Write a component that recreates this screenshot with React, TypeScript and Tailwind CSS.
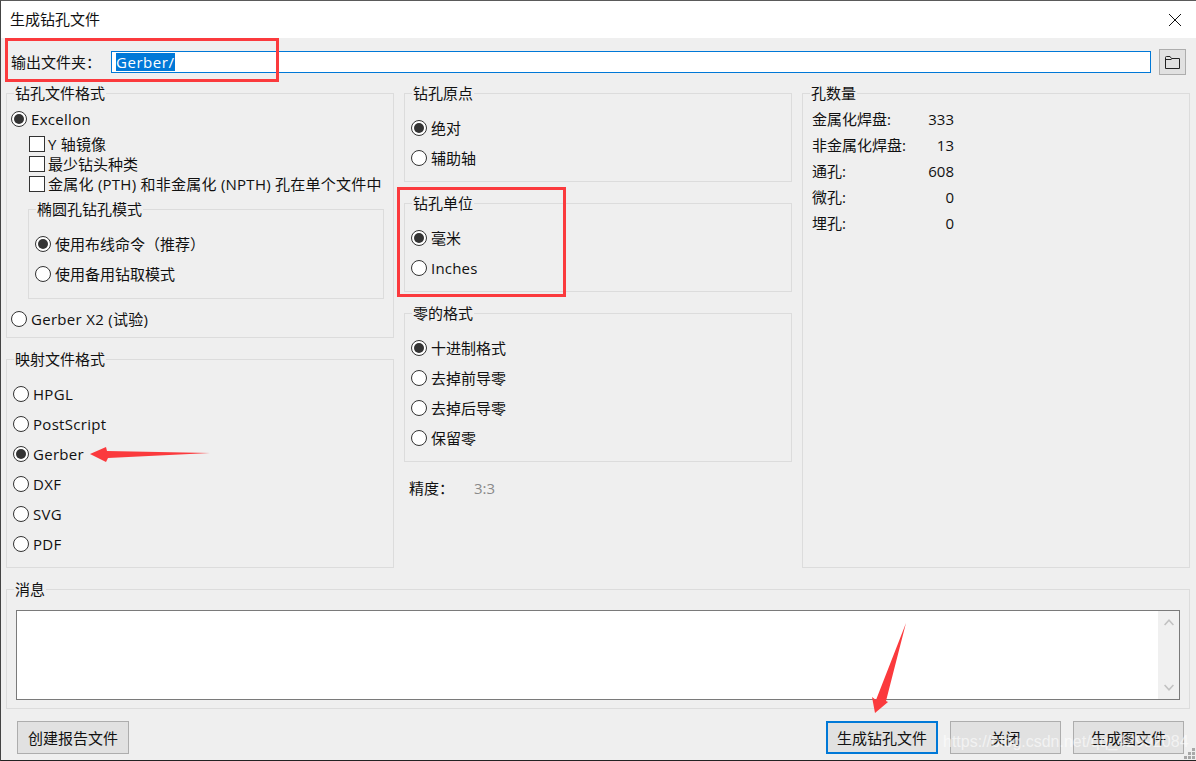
import React from "react";

function Radio({ checked = false, label, className = "" }: { checked?: boolean; label: string; className?: string }) {
  return (
    <div className={`flex items-center gap-1 ${className}`}>
      <span className="flex h-4 w-4 shrink-0 items-center justify-center rounded-full border border-[#333] bg-white">
        {checked && <span className="h-[10px] w-[10px] rounded-full bg-[#333]" />}
      </span>
      <span>{label}</span>
    </div>
  );
}

function Check({ label, className = "" }: { label: string; className?: string }) {
  return (
    <div className="ml-[18px] flex h-5 items-center gap-[3px]">
      <span className="h-4 w-4 shrink-0 border border-[#333] bg-white" />
      <span className={className}>{label}</span>
    </div>
  );
}

function Group({
  title,
  className = "",
  inner = "",
  children,
}: {
  title: string;
  className?: string;
  inner?: string;
  children?: React.ReactNode;
}) {
  return (
    <fieldset className={`m-0 min-w-0 border border-[#dcdcdc] p-0 ${className}`}>
      <legend className="ml-[7px] px-[1px] leading-5">{title}</legend>
      <div className={inner}>{children}</div>
    </fieldset>
  );
}

function Btn({ label, focus = false, className = "" }: { label: string; focus?: boolean; className?: string }) {
  return (
    <div
      className={`flex h-[33px] items-center justify-center bg-[#e1e1e1] ${
        focus ? "border-2 border-[#0078d7]" : "border border-[#adadad]"
      } ${className}`}
    >
      {label}
    </div>
  );
}

function Stat({ label, value }: { label: string; value: string }) {
  return (
    <div className="flex h-[26px] w-[142px] items-center justify-between">
      <span>{label}</span>
      <span>{value}</span>
    </div>
  );
}

export default function App() {
  return (
    <div className="relative flex h-[761px] w-[1196px] flex-col overflow-hidden border-t border-b border-l border-t-[#5a5a5a] border-b-[#222] border-l-[#444] bg-[#efefef] font-['Open_Sans','Noto_Sans_CJK_SC',sans-serif] text-[15px] leading-5 text-[#111]">
      {/* Title bar */}
      <div className="flex h-[37px] shrink-0 items-center justify-between bg-white pb-[2px] pl-[9px] pr-[15px]">
        <span>生成钻孔文件</span>
        <svg className="mt-[2px]" width="12" height="12" viewBox="0 0 12 12" fill="none" stroke="#111" strokeWidth="1">
          <path d="M0 0 L12 12 M12 0 L0 12" />
        </svg>
      </div>

      <div className="flex min-h-0 flex-1 flex-col pl-[5px] pr-[6px]">
        {/* Output folder */}
        <div className="flex h-[45px] shrink-0 items-center pt-[3px]">
          <span className="ml-[5px] w-[100px]">输出文件夹：</span>
          <div className="flex h-[22px] w-[1040px] items-center border border-[#0078d7] bg-white pl-1">
            <span className="bg-[#0078d7] leading-[18px] tracking-[0.55px] text-white">Gerber/</span>
          </div>
          <div className="ml-2 flex h-[26px] w-[27px] items-center justify-center border border-[#adadad] bg-[#e1e1e1]">
            <svg width="15" height="13" viewBox="0 0 15 13" fill="none" stroke="#222" strokeWidth="1">
              <path d="M0.5 12.5 V1.5 Q0.5 0.5 1.5 0.5 H5 L6.5 2.5 H14.5 V12.5 Z M0.5 3.5 H6.5" />
            </svg>
          </div>
        </div>

        {/* Columns */}
        <div className="flex h-[485px] shrink-0 gap-[10px]">
          <div className="flex w-[388px] flex-col gap-[11px]">
            <Group title="钻孔文件格式" className="h-[255px]" inner="pl-1">
              <Radio checked label="Excellon" className="mt-1 h-6 tracking-[0.3px]" />
              <div className="mt-[3px]">
                <Check label="Y 轴镜像" className="tracking-[0.2px]" />
                <Check label="最少钻头种类" />
                <Check label="金属化 (PTH) 和非金属化 (NPTH) 孔在单个文件中" className="tracking-[0.25px]" />
              </div>
              <Group title="椭圆孔钻孔模式" className="ml-[17px] mt-[5px] h-[100px] w-[356px]" inner="pl-[6px] pt-[10px]">
                <Radio checked label="使用布线命令（推荐）" className="h-[30px]" />
                <Radio label="使用备用钻取模式" className="h-[30px]" />
              </Group>
              <Radio label="Gerber X2 (试验)" className="mt-2 h-6 tracking-[0.3px]" />
            </Group>
            <Group title="映射文件格式" className="flex-1" inner="pl-[6px] pt-[10px] tracking-[0.3px]">
              <Radio label="HPGL" className="h-[30px]" />
              <Radio label="PostScript" className="h-[30px]" />
              <Radio checked label="Gerber" className="h-[30px]" />
              <Radio label="DXF" className="h-[30px]" />
              <Radio label="SVG" className="h-[30px]" />
              <Radio label="PDF" className="h-[30px]" />
            </Group>
          </div>

          <div className="flex w-[388px] flex-col gap-[11px]">
            <Group title="钻孔原点" className="h-[99px]" inner="pl-[6px] pt-[10px]">
              <Radio checked label="绝对" className="h-[30px]" />
              <Radio label="辅助轴" className="h-[30px]" />
            </Group>
            <Group title="钻孔单位" className="h-[99px]" inner="pl-[6px] pt-[10px]">
              <Radio checked label="毫米" className="h-[30px]" />
              <Radio label="Inches" className="h-[30px] tracking-[0.2px]" />
            </Group>
            <Group title="零的格式" className="h-[159px]" inner="pl-[6px] pt-[10px]">
              <Radio checked label="十进制格式" className="h-[30px]" />
              <Radio label="去掉前导零" className="h-[30px]" />
              <Radio label="去掉后导零" className="h-[30px]" />
              <Radio label="保留零" className="h-[30px]" />
            </Group>
            <div className="mt-[3px] flex h-6 items-center pl-[5px]">
              <span className="w-[65px]">精度：</span>
              <span className="text-[#8a8a8a]">3:3</span>
            </div>
          </div>

          <Group title="孔数量" className="w-[388px]" inner="pl-[9px] pt-[3px]">
            <Stat label="金属化焊盘:" value="333" />
            <Stat label="非金属化焊盘:" value="13" />
            <Stat label="通孔:" value="608" />
            <Stat label="微孔:" value="0" />
            <Stat label="埋孔:" value="0" />
          </Group>
        </div>

        {/* Messages */}
        <Group title="消息" className="mt-[11px] h-[130px] shrink-0" inner="px-[9px] pt-[11px]">
          <div className="flex h-[90px] justify-end border border-[#7a7a7a] bg-white">
            <div className="flex h-full w-[21px] flex-col items-center justify-between bg-[#f0f0f0] py-2">
              <svg width="10" height="7" viewBox="0 0 10 7" fill="none" stroke="#c2c2c2" strokeWidth="1.6">
                <path d="M0.6 6 L5 1.2 L9.4 6" />
              </svg>
              <svg width="10" height="7" viewBox="0 0 10 7" fill="none" stroke="#c2c2c2" strokeWidth="1.6">
                <path d="M0.6 1 L5 5.8 L9.4 1" />
              </svg>
            </div>
          </div>
        </Group>

        {/* Footer buttons */}
        <div className="mt-3 flex shrink-0 items-center pl-[11px] pr-[6px]">
          <Btn label="创建报告文件" className="w-[112px]" />
          <Btn label="生成钻孔文件" focus className="ml-auto w-[112px]" />
          <Btn label="关闭" className="ml-3 w-[111px]" />
          <Btn label="生成图文件" className="ml-3 w-[111px]" />
        </div>
      </div>

      {/* Annotations lying over the dialog */}
      <div className="absolute left-[4px] top-[37px] h-[44px] w-[274px] border-[3px] border-[#fb3a3d]" />
      <div className="absolute left-[396px] top-[186px] h-[110px] w-[169px] border-[3px] border-[#fb3a3d]" />
      <svg className="absolute left-[-1px] top-[-1px]" width="1196" height="761" fill="#fb3a3d">
        <path d="M90 454 L106 447 L107 451 L210 453 L108 458 L106 462 Z" />
        <path d="M906 623 L886 701 L888 702 L875 713 L872 697 L876 700 Z" />
      </svg>
      <span className="absolute left-[942px] top-[731px] whitespace-nowrap font-['Liberation_Sans',sans-serif] text-[16px] text-white/60">
        https://blog.csdn.net/qq_42992084
      </span>
      <svg className="absolute bottom-0 right-0" width="12" height="12" fill="#a8a8a8">
        <rect x="8" y="0" width="3" height="3" />
        <rect x="4" y="4" width="3" height="3" />
        <rect x="8" y="4" width="3" height="3" />
        <rect x="0" y="8" width="3" height="3" />
        <rect x="4" y="8" width="3" height="3" />
        <rect x="8" y="8" width="3" height="3" />
      </svg>
    </div>
  );
}
